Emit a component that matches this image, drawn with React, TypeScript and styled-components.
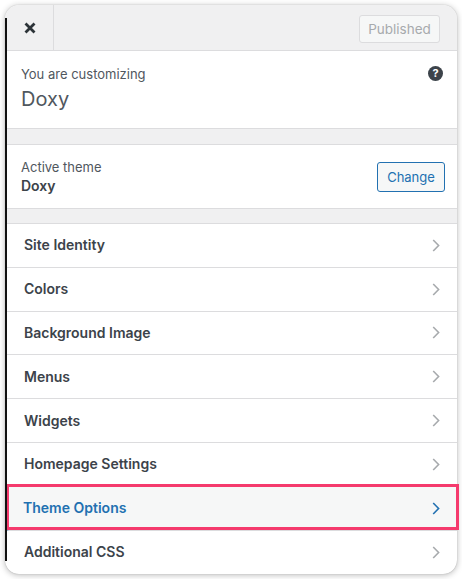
import React from "react";
import styled, { createGlobalStyle, css } from "styled-components";

const GlobalStyle = createGlobalStyle`
  html, body {
    margin: 0;
    padding: 0;
    background: #ffffff;
  }
  body {
    font-family: Inter, "Liberation Sans", Arial, sans-serif;
    -webkit-font-smoothing: antialiased;
  }
  * { box-sizing: border-box; }
`;

const Frame = styled.div`
  width: 462px;
  height: 579px;
  padding: 5px 5px 0 5px;
  overflow: hidden;
`;

const Panel = styled.div`
  position: relative;
  width: 452px;
  background: #ffffff;
  border-radius: 14px;
  box-shadow: 0 1px 6px rgba(0, 0, 0, 0.28), 0 0 1px rgba(0, 0, 0, 0.3);
  display: flex;
  flex-direction: column;

  &::before {
    content: "";
    position: absolute;
    left: 0;
    top: 13px;
    bottom: 13px;
    width: 1.5px;
    background: #111;
    z-index: 3;
  }
`;

const Header = styled.div`
  display: flex;
  align-items: center;
  height: 46px;
  background: #f0f0f1;
  border-bottom: 1px solid #dcdcde;
  border-radius: 14px 14px 0 0;
  padding-left: 1px;
`;

const CloseButton = styled.button`
  width: 48px;
  height: 45px;
  border: none;
  border-right: 1px solid #dcdcde;
  background: transparent;
  display: flex;
  align-items: center;
  justify-content: center;
  padding: 0;
  margin-right: auto;
`;

const PublishedButton = styled.button`
  height: 28px;
  width: 81px;
  margin-right: 17px;
  margin-top: 2px;
  background: #f6f7f7;
  border: 1px solid #dcdcde;
  border-radius: 3px;
  color: #a7aaad;
  font-family: inherit;
  font-size: 13.5px;
  padding: 0;
`;

const InfoSection = styled.div`
  display: flex;
  justify-content: space-between;
  align-items: flex-start;
  height: 78px;
  padding: 14px 14px 0 16px;
  border-bottom: 1px solid #dcdcde;
`;

const InfoText = styled.div`
  display: flex;
  flex-direction: column;
`;

const SmallLabel = styled.span`
  font-size: 13px;
  line-height: 18px;
  color: #50575e;
`;

const SiteTitle = styled.span`
  font-size: 20px;
  line-height: 28px;
  margin-top: 2px;
  color: #50575e;
`;

const HelpIcon = styled.span`
  width: 15px;
  height: 15px;
  border-radius: 50%;
  background: #3c434a;
  color: #fff;
  font-size: 11px;
  font-weight: 700;
  line-height: 15px;
  text-align: center;
  margin-top: 1px;
`;

const Gap = styled.div<{ $h: number }>`
  height: ${(p) => p.$h + 1}px;
  background: #f0f0f1;
  border-bottom: 1px solid #dcdcde;
`;

const ThemeSection = styled.div`
  display: flex;
  justify-content: space-between;
  align-items: center;
  height: 64px;
  padding: 0 12px 0 16px;
  border-bottom: 1px solid #dcdcde;
`;

const ThemeName = styled.span`
  font-size: 14px;
  line-height: 20px;
  font-weight: 600;
  color: #3c434a;
`;

const ChangeButton = styled.button`
  width: 68px;
  height: 30px;
  background: #f6f7f7;
  border: 1px solid #2271b1;
  border-radius: 3px;
  color: #2271b1;
  font-family: inherit;
  font-size: 13px;
  padding: 0;
`;

const Row = styled.div<{ $active?: boolean; $last?: boolean }>`
  position: relative;
  display: flex;
  align-items: center;
  justify-content: space-between;
  height: 43.8px;
  padding: 0 17px 0 19px;
  border-bottom: 1px solid #dcdcde;
  color: #3c434a;
  ${(p) =>
    p.$last &&
    css`
      height: 43px;
      border-bottom: none;
      border-radius: 0 0 14px 14px;
    `}
  ${(p) =>
    p.$active &&
    css`
      background: #f6f7f7;
      color: #2271b1;
      border-left: 4px solid #2271b1;
      padding-left: 14px;
      &::after {
        content: "";
        position: absolute;
        top: -3px;
        left: -3px;
        right: -2px;
        bottom: 0;
        border: 3px solid #f53a6d;
        pointer-events: none;
      }
    `}
`;

const RowTitle = styled.span`
  font-size: 14px;
  font-weight: 600;
  line-height: 20px;
`;

const Chevron = styled.svg<{ $active?: boolean }>`
  width: 8px;
  height: 13px;
  color: ${(p) => (p.$active ? "#2271b1" : "#a7aaad")};
`;

const ChevronIcon = ({ active }: { active?: boolean }) => (
  <Chevron $active={active} viewBox="0 0 8 13" fill="none">
    <path d="M1.2 1 L6.6 6.5 L1.2 12" stroke="currentColor" strokeWidth="1.6" />
  </Chevron>
);

const items = [
  "Site Identity",
  "Colors",
  "Background Image",
  "Menus",
  "Widgets",
  "Homepage Settings",
  "Theme Options",
  "Additional CSS",
];

export default function App() {
  return (
    <>
      <GlobalStyle />
      <Frame>
        <Panel>
          <Header>
            <CloseButton aria-label="Close">
              <svg width="12" height="12" viewBox="0 0 12 12">
                <path
                  d="M1.5 1.5 L10.5 10.5 M10.5 1.5 L1.5 10.5"
                  stroke="#2c3338"
                  strokeWidth="2.8"
                />
              </svg>
            </CloseButton>
            <PublishedButton disabled>Published</PublishedButton>
          </Header>
          <InfoSection>
            <InfoText>
              <SmallLabel>You are customizing</SmallLabel>
              <SiteTitle>Doxy</SiteTitle>
            </InfoText>
            <HelpIcon>?</HelpIcon>
          </InfoSection>
          <Gap $h={15} />
          <ThemeSection>
            <InfoText>
              <SmallLabel>Active theme</SmallLabel>
              <ThemeName>Doxy</ThemeName>
            </InfoText>
            <ChangeButton>Change</ChangeButton>
          </ThemeSection>
          <Gap $h={14} />
          {items.map((label, i) => {
            const active = label === "Theme Options";
            return (
              <Row key={label} $active={active} $last={i === items.length - 1}>
                <RowTitle>{label}</RowTitle>
                <ChevronIcon active={active} />
              </Row>
            );
          })}
        </Panel>
      </Frame>
    </>
  );
}
